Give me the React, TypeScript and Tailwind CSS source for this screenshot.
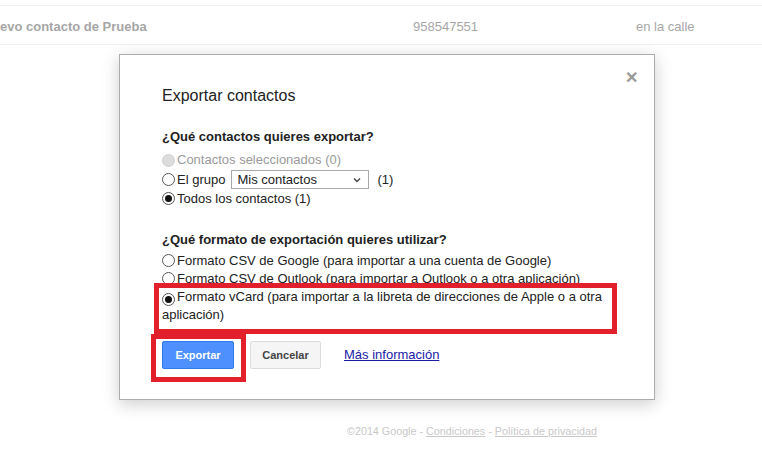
import React, { useState } from "react"

const font = { fontFamily: '"Liberation Sans", Arial, sans-serif' }

interface RadioProps {
    checked?: boolean;
    disabled?: boolean;
}

const Radio = ({ checked, disabled }: RadioProps) => {
    if (disabled) {
        return <span className="inline-block w-[13px] h-[13px] rounded-full bg-[#dcdcdc] border border-[#d0d0d0] mr-[2px] align-[-2px]" />
    }
    return (
        <span className="inline-flex items-center justify-center w-[13px] h-[13px] rounded-full border border-[#555] bg-white mr-[2px] align-[-2px]">
            {checked && <span className="block w-[7px] h-[7px] rounded-full bg-[#111]" />}
        </span>
    )
}

const App = () => {
    const [format] = useState("vcard")

    return (
        <div className="relative w-[762px] h-[458px] overflow-hidden bg-white text-[13px]" style={font}>
            {/* contact row behind the dialog */}
            <div className="mt-[5px] h-[40px] pt-[3px] border-y border-[#f1f1f1] flex items-center text-[#a6a6a6]">
                <span className="w-[413px] font-bold">evo contacto de Prueba</span>
                <span className="w-[223px]">958547551</span>
                <span>en la calle</span>
            </div>

            {/* footer */}
            <div className="absolute left-[347px] top-[423px] text-[10.75px] text-[#c8c8c8]">
                ©2014 Google - <span className="underline">Condiciones</span> - <span className="underline">Política de privacidad</span>
            </div>

            {/* dialog */}
            <div className="absolute left-[119px] top-[54px] w-[536px] h-[346px] bg-white border border-[#acacac] shadow-[0_4px_16px_rgba(0,0,0,0.2)] pt-[31px] px-[42px] text-[#222]">
                <button className="absolute right-[16px] top-[15px] text-[#9a9a9a] text-[16px] font-bold leading-none">✕</button>

                <h1 className="text-[16px] leading-[20px] text-[#222]">Exportar contactos</h1>

                <h2 className="mt-[23px] font-bold leading-[16px]">¿Qué contactos quieres exportar?</h2>
                <div className="mt-[5px]">
                    <div className="h-[20px] flex items-center text-[#9a9a9a]">
                        <Radio disabled />Contactos seleccionados (0)
                    </div>
                    <div className="h-[19px] flex items-center">
                        <Radio />El grupo
                        <div className="ml-[6px] w-[138px] h-[19px] border border-[#a9a9a9] flex items-center justify-between pl-[5px] pr-[7px]">
                            <span>Mis contactos</span>
                            <svg width="8" height="6" viewBox="0 0 8 6"><path d="M1 1.5 L4 4.5 L7 1.5" stroke="#444" strokeWidth="1.4" fill="none" /></svg>
                        </div>
                        <span className="ml-[8px]">(1)</span>
                    </div>
                    <div className="h-[19px] flex items-center">
                        <Radio checked />Todos los contactos (1)
                    </div>
                </div>

                <h2 className="mt-[24px] font-bold leading-[16px]">¿Qué formato de exportación quieres utilizar?</h2>
                <div className="mt-[4px] leading-[18px]">
                    <div><Radio checked={format === "google"} />Formato CSV de Google (para importar a una cuenta de Google)</div>
                    <div><Radio checked={format === "outlook"} />Formato CSV de Outlook (para importar a Outlook o a otra aplicación)</div>
                    <div><Radio checked={format === "vcard"} />Formato vCard (para importar a la libreta de direcciones de Apple o a otra aplicación)</div>
                </div>

                <div className="mt-[17px] flex items-center">
                    <button className="w-[72px] h-[28px] rounded-[2px] bg-[#4d90fe] border border-[#3079ed] text-white text-[11px] font-bold">Exportar</button>
                    <button className="ml-[16px] w-[71px] h-[28px] rounded-[2px] bg-[#f5f5f5] border border-[#dcdcdc] text-[#444] text-[11px] font-bold">Cancelar</button>
                    <a className="ml-[23px] text-[#1a1aa6] underline">Más información</a>
                </div>

                {/* red annotation boxes */}
                <div className="absolute left-[34px] top-[228px] w-[463px] h-[51px] border-[5px] border-[#e1202b]" />
                <div className="absolute left-[31px] top-[279px] w-[95px] h-[48px] border-[5px] border-[#e1202b]" />
            </div>
        </div>
    )
}

export default App
